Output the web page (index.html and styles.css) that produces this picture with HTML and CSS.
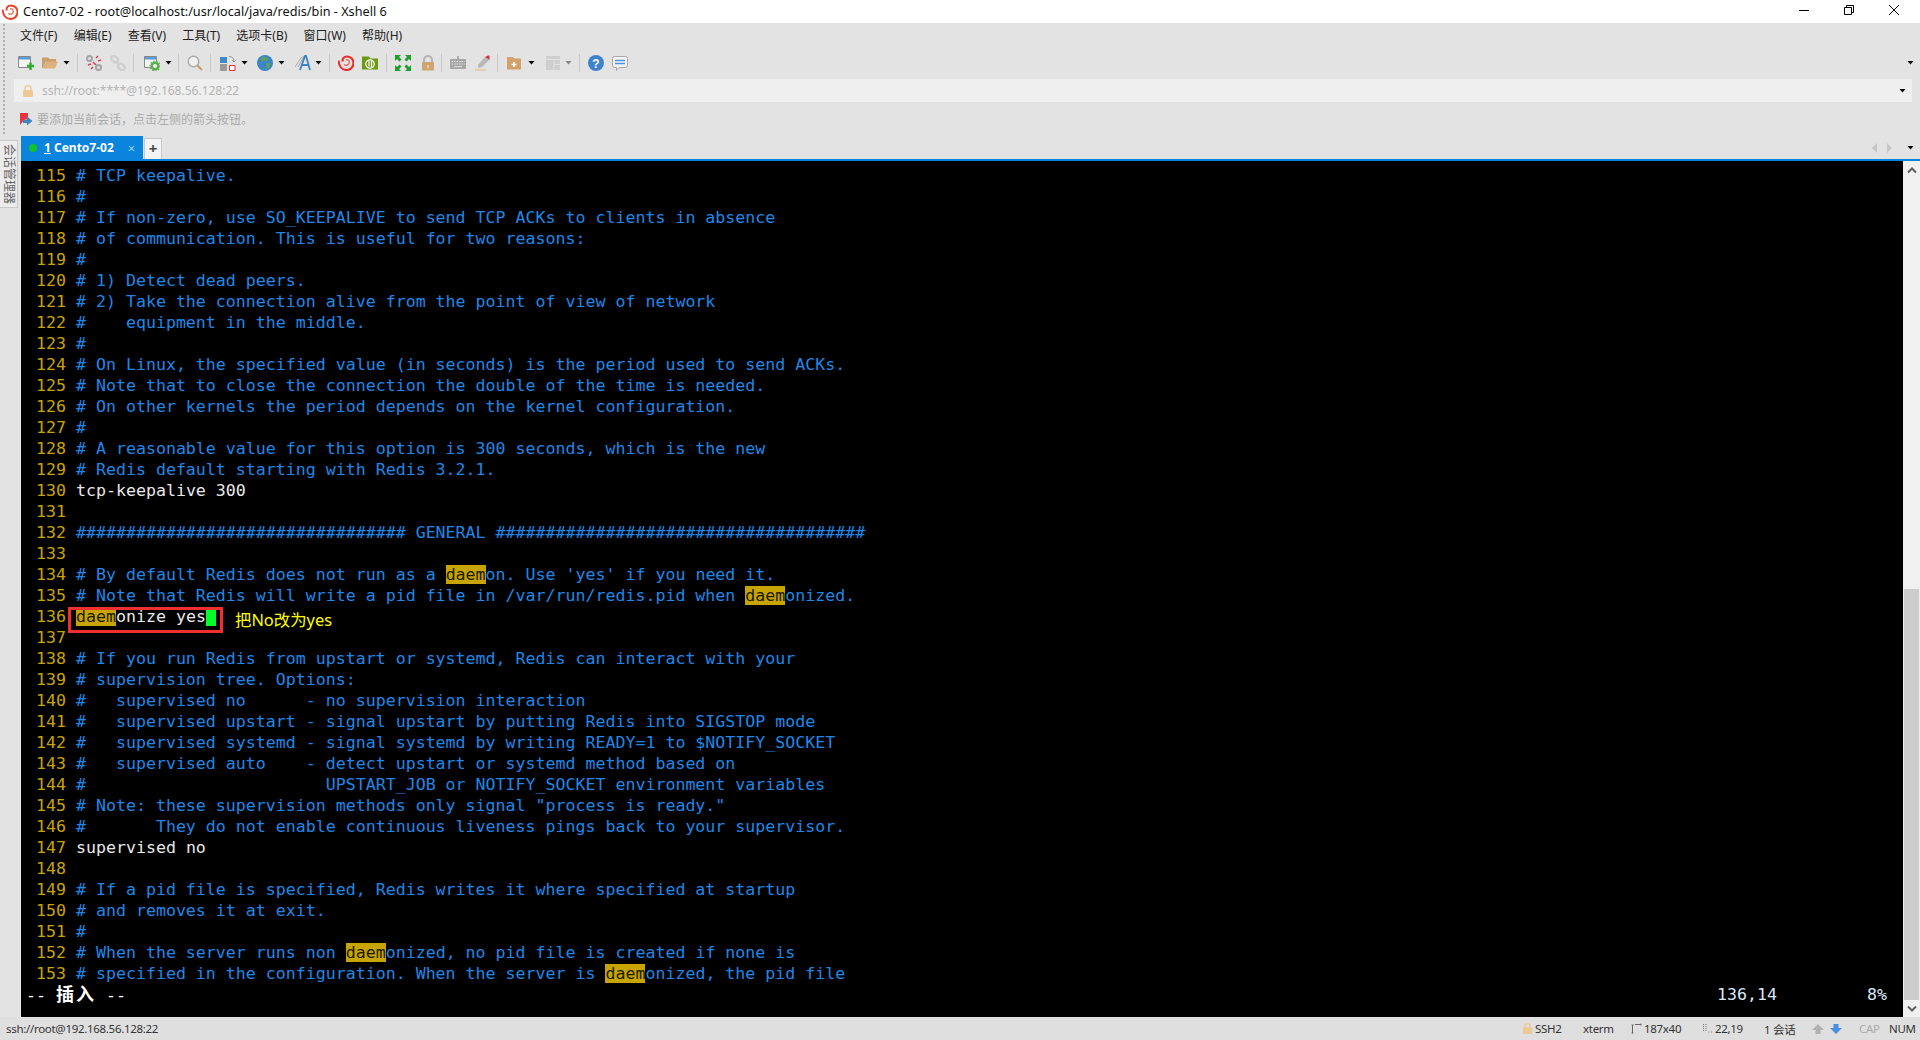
FILE: index.html
```html
<!DOCTYPE html>
<html lang="zh">
<head>
<meta charset="utf-8">
<title>Cento7-02 - Xshell 6</title>
<link rel="stylesheet" href="styles.css">
</head>
<body>
<div class="app">
  <header class="titlebar">
    <svg class="app-logo" viewBox="0 0 16 16"><path d="M.5 5.500C1 11 4 15 8.500 15c4 0 7-3 7-7 0-3.800-3-6.500-6.500-6.500-3 0-5 2.200-4.300 5" fill="none" stroke="#e8432e" stroke-width="2"/><path d="M6 9.500c2 1.500 5 .5 5.300-2 .2-2-1.800-3.300-3.300-2.500" fill="none" stroke="#ee7a62" stroke-width="1.500"/></svg>
    <span class="title-text">Cento7-02 - root@localhost:/usr/local/java/redis/bin - Xshell 6</span>
    <div class="win-btns">
      <svg class="win-btn" viewBox="0 0 12 12"><path d="M1 6.500h10" stroke="#000" fill="none"/></svg>
      <svg class="win-btn" viewBox="0 0 12 12"><path d="M1.500 3.500h7v7h-7zM3.500 3.500v-2h7v7h-2" stroke="#000" fill="none"/></svg>
      <svg class="win-btn" viewBox="0 0 12 12"><path d="M1 1l10 10M11 1L1 11" stroke="#000" fill="none"/></svg>
    </div>
  </header>

  <div class="chrome">
    <div class="grip"></div>
    <div class="chrome-main">
      <nav class="menubar">
        <span>文件(F)</span><span>编辑(E)</span><span>查看(V)</span><span>工具(T)</span><span>选项卡(B)</span><span>窗口(W)</span><span>帮助(H)</span>
      </nav>
      <div class="toolbar">
        <svg class="ic" viewBox="0 0 16 16"><path d="M.5 1.500h12v11H.5z" fill="#f4f4f4" stroke="#888"/><path d="M1 2h11v2.500H1z" fill="#5a9bd8"/><path d="M9 11h7M12.500 7.500v7.500" stroke="#2eaa2e" stroke-width="2.400"/></svg>
        <svg class="ic m8" viewBox="0 0 16 16"><path d="M0 2.500h6l1.500 1.500H14v3H3.500L1 13H0z" fill="#c9a06a"/><path d="M3.500 6.500H16L13 13.500H.7z" fill="#dcb27e"/></svg>
        <i class="dd"></i><i class="sep"></i>
        <svg class="ic m8" viewBox="0 0 16 16"><g fill="none" stroke="#a5a5a5" stroke-width="2"><circle cx="3.500" cy="3.500" r="2.500"/><circle cx="12.500" cy="12.500" r="2.500"/></g><path d="M10 3l2-2M12 6l3-1M2 10l3-1M5 14l2-2M7 7l3 3" stroke="#e0434f" stroke-width="1.600"/></svg>
        <svg class="ic m8" viewBox="0 0 16 16"><g fill="none" stroke="#cfcfcf" stroke-width="2.400"><rect x="1" y="1.500" width="7" height="5" rx="2" transform="rotate(40 4.500 4)"/><rect x="8" y="9.500" width="7" height="5" rx="2" transform="rotate(40 11.500 12)"/><path d="M6 6l4 4"/></g></svg>
        <i class="sep"></i>
        <svg class="ic m10" viewBox="0 0 16 16"><path d="M.5 1.500h12v11H.5z" fill="#f4f4f4" stroke="#888"/><path d="M1 2h11v2.500H1z" fill="#5a9bd8"/><circle cx="11" cy="11" r="3.300" fill="#f4f4f4" stroke="#58b04a" stroke-width="2.400"/><circle cx="11" cy="11" r="5" fill="none" stroke="#58b04a" stroke-width="1.200" stroke-dasharray="1.500 1.500"/></svg>
        <i class="dd"></i><i class="sep sep-6"></i>
        <svg class="ic m8" viewBox="0 0 16 16"><circle cx="6.500" cy="6.500" r="5.300" fill="#f0f0f0" stroke="#aaa" stroke-width="1.400"/><path d="M10.500 10.500l4.500 4.500" stroke="#c9a06a" stroke-width="2.200"/></svg>
        <i class="sep"></i>
        <svg class="ic m9" viewBox="0 0 16 16"><path d="M0 2h7v6H0z" fill="#3d8ad0"/><path d="M0 9h7v7H0z" fill="#999"/><path d="M9.500 10.500h5.500v5h-5.500z" fill="#f8f8f8" stroke="#e0303a"/><path d="M9 1.500c3 0 5 1.500 5 5M14 7l-2-2M14 7l1.800-2" stroke="#999" fill="none"/></svg>
        <i class="dd"></i>
        <svg class="ic m9" viewBox="0 0 16 16"><circle cx="8" cy="8" r="8" fill="#3d85c6"/><path d="M5 1.500l5 1 1.500 2.500-2 1.500L8 5 5.500 6.500 3 5zM9 8l4.500.5L12 13l-2.500 1.500z" fill="#58a45a"/></svg>
        <i class="dd"></i>
        <svg class="ic m10" viewBox="0 0 16 16"><path d="M0 12L7 1.500M3 12L9 1" stroke="#aaa" fill="none"/><path d="M5 15L10 1h1l4 14M7 10h6" stroke="#3d85c6" stroke-width="1.800" fill="none"/></svg>
        <i class="dd dd-4"></i><i class="sep"></i>
        <svg class="ic m8" viewBox="0 0 16 16"><path d="M.5 5.500C1 11 4 15 8.500 15c4 0 7-3 7-7 0-3.800-3-6.500-6.500-6.500-3 0-5 2.200-4.300 5" fill="none" stroke="#e8302e" stroke-width="2.200"/><path d="M6 9.500c2 1.500 5 .5 5.300-2 .2-2-1.800-3.300-3.300-2.500" fill="none" stroke="#f06a60" stroke-width="1.500"/></svg>
        <svg class="ic m8" viewBox="0 0 16 16"><path d="M0 1.500h7l1.500 2H16v11H0z" fill="#6c9a10"/><circle cx="8" cy="9" r="4.200" fill="none" stroke="#fff" stroke-width="1.200"/><path d="M7 5.500v6M9.500 6v6" stroke="#fff" stroke-width="1.200"/></svg>
        <i class="sep sep-8"></i>
        <svg class="ic m8" viewBox="0 0 16 16"><g fill="#1f9e2c"><path d="M0 0h6L4 2l2.500 2.500L4.500 6.500 2 4 0 6zM16 0v6l-2-2-2.500 2.500-2-2L12 2 10 0zM0 16v-6l2 2 2.500-2.500 2 2L4 14l2 2zM16 16h-6l2-2-2.500-2.500 2-2L14 12l2-2z"/></g></svg>
        <svg class="ic m9" viewBox="0 0 16 16"><path d="M4 7V5a4 4 0 0 1 8 0v2" fill="none" stroke="#b3b3b3" stroke-width="2"/><rect x="2" y="7" width="12" height="8.500" rx="1" fill="#d0a470"/><path d="M8 10v3" stroke="#f3ddc0" stroke-width="1.500"/></svg>
        <i class="sep sep-5"></i>
        <svg class="ic m8" viewBox="0 0 16 16"><rect y="4" width="16" height="10" rx="1" fill="#a5a5a5"/><path d="M8 1v3" stroke="#777"/><path d="M1.500 6.500h13M1.500 9h13" stroke="#e4e4e4" stroke-dasharray="1.500 1"/><path d="M4 11.700h8" stroke="#e4e4e4"/></svg>
        <svg class="ic m8" viewBox="0 0 16 16"><path d="M4 10l7-8 4 3-7 7-4 1z" fill="#b8b8b8"/><path d="M11 2l3-1.500 1.500 0V5z" fill="#d8333f"/><path d="M1 15h11" stroke="#e8b77e"/></svg>
        <i class="sep"></i>
        <svg class="ic m9" viewBox="0 0 16 16"><path d="M0 2h6l1.500 1.500H14v11H0z" fill="#d3a26a"/><path d="M7 7v5M4.500 9.500h5" stroke="#fff" stroke-width="1.600"/></svg>
        <i class="dd"></i>
        <svg class="ic m10" viewBox="0 0 16 16"><path d="M1 1h14v14H1z" fill="#cfcfcf"/><path d="M1 4.500h14M9 4.500V15M9 9.500h6" stroke="#e2e2e2"/></svg>
        <i class="dd dd-4 dd-off"></i><i class="sep"></i>
        <svg class="ic m8" viewBox="0 0 16 16"><circle cx="8" cy="8" r="8" fill="#3f82cc"/><text x="8" y="12.500" class="help-q">?</text></svg>
        <svg class="ic m8" viewBox="0 0 16 16"><path d="M2.500 1.500h11a2 2 0 0 1 2 2v7a2 2 0 0 1-2 2H7l-2.500 3v-3h-2a2 2 0 0 1-2-2v-7a2 2 0 0 1 2-2z" fill="#f3f3f3" stroke="#a8a8a8"/><path d="M3 5.500h10M3 8.500h10" stroke="#4f94dc" stroke-width="1.600"/></svg>
        <i class="dd dd-end"></i>
      </div>
      <div class="addressbar">
        <svg class="lock" viewBox="0 0 12 12"><path d="M3 5V3.500a3 3 0 0 1 6 0V5" fill="none" stroke="#ecc995" stroke-width="1.500"/><rect x="1" y="5" width="10" height="7" rx="1.500" fill="#ecc995"/></svg>
        <span class="addr-text">ssh://root:****@192.168.56.128:22</span>
        <i class="dd dd-end"></i>
      </div>
      <div class="hintbar">
        <svg class="flag" viewBox="0 0 13 13"><path d="M0 0h8v6l-4 1-4 5z" fill="#e8353f"/><path d="M3 7h4V3.500L12.500 8 7 12.500V10H3z" fill="#3d85c6"/></svg>
        <span>要添加当前会话，点击左侧的箭头按钮。</span>
      </div>
    </div>
  </div>

  <div class="workspace">
    <aside class="side">
      <div class="side-tab">会话管理器</div>
    </aside>
    <section class="session">
      <div class="tabbar">
        <div class="tab">
          <i class="dot"></i>
          <span class="tab-label"><u>1</u> Cento7-02</span>
          <span class="tab-close">×</span>
        </div>
        <div class="tab-add">+</div>
        <div class="tab-nav">
          <i class="tri-l"></i><i class="tri-r"></i><i class="dd"></i>
        </div>
      </div>
      <div class="termwrap">
        <main class="term"><div class="ln"> <b>115</b> # TCP keepalive.</div><div class="ln"> <b>116</b> #</div><div class="ln"> <b>117</b> # If non-zero, use SO_KEEPALIVE to send TCP ACKs to clients in absence</div><div class="ln"> <b>118</b> # of communication. This is useful for two reasons:</div><div class="ln"> <b>119</b> #</div><div class="ln"> <b>120</b> # 1) Detect dead peers.</div><div class="ln"> <b>121</b> # 2) Take the connection alive from the point of view of network</div><div class="ln"> <b>122</b> #    equipment in the middle.</div><div class="ln"> <b>123</b> #</div><div class="ln"> <b>124</b> # On Linux, the specified value (in seconds) is the period used to send ACKs.</div><div class="ln"> <b>125</b> # Note that to close the connection the double of the time is needed.</div><div class="ln"> <b>126</b> # On other kernels the period depends on the kernel configuration.</div><div class="ln"> <b>127</b> #</div><div class="ln"> <b>128</b> # A reasonable value for this option is 300 seconds, which is the new</div><div class="ln"> <b>129</b> # Redis default starting with Redis 3.2.1.</div><div class="ln"> <b>130</b> <em>tcp-keepalive 300</em></div><div class="ln"> <b>131</b> </div><div class="ln"> <b>132</b> ################################# GENERAL #####################################</div><div class="ln"> <b>133</b> </div><div class="ln"> <b>134</b> # By default Redis does not run as a <mark>daem</mark>on. Use 'yes' if you need it.</div><div class="ln"> <b>135</b> # Note that Redis will write a pid file in /var/run/redis.pid when <mark>daem</mark>onized.</div><div class="ln"> <b>136</b> <em><mark>daem</mark>onize yes<s> </s></em></div><div class="ln"> <b>137</b> </div><div class="ln"> <b>138</b> # If you run Redis from upstart or systemd, Redis can interact with your</div><div class="ln"> <b>139</b> # supervision tree. Options:</div><div class="ln"> <b>140</b> #   supervised no      - no supervision interaction</div><div class="ln"> <b>141</b> #   supervised upstart - signal upstart by putting Redis into SIGSTOP mode</div><div class="ln"> <b>142</b> #   supervised systemd - signal systemd by writing READY=1 to $NOTIFY_SOCKET</div><div class="ln"> <b>143</b> #   supervised auto    - detect upstart or systemd method based on</div><div class="ln"> <b>144</b> #                        UPSTART_JOB or NOTIFY_SOCKET environment variables</div><div class="ln"> <b>145</b> # Note: these supervision methods only signal "process is ready."</div><div class="ln"> <b>146</b> #       They do not enable continuous liveness pings back to your supervisor.</div><div class="ln"> <b>147</b> <em>supervised no</em></div><div class="ln"> <b>148</b> </div><div class="ln"> <b>149</b> # If a pid file is specified, Redis writes it where specified at startup</div><div class="ln"> <b>150</b> # and removes it at exit.</div><div class="ln"> <b>151</b> #</div><div class="ln"> <b>152</b> # When the server runs non <mark>daem</mark>onized, no pid file is created if none is</div><div class="ln"> <b>153</b> # specified in the configuration. When the server is <mark>daem</mark>onized, the pid file</div><div class="ln statusln"><em>-- <span class="cjk">插入</span> --</em><span class="pos">136,14</span><span class="pct">8%</span></div>
          <div class="redbox"></div>
          <div class="note">把No改为yes</div>
        </main>
        <div class="scrollbar">
          <div class="sb-arrow"><svg viewBox="0 0 12 8"><path d="M2 6.500l4-4 4 4" fill="none" stroke="#606060" stroke-width="2"/></svg></div>
          <div class="sb-track"><div class="sb-thumb"></div></div>
          <div class="sb-arrow"><svg viewBox="0 0 12 8"><path d="M2 1.500l4 4 4-4" fill="none" stroke="#606060" stroke-width="2"/></svg></div>
        </div>
      </div>
    </section>
  </div>

  <footer class="statusbar">
    <span class="conn">ssh://root@192.168.56.128:22</span>
    <div class="st-right">
      <svg class="st-lock" viewBox="0 0 12 12"><path d="M3 5V3.500a3 3 0 0 1 6 0V5" fill="none" stroke="#ecc995" stroke-width="1.500"/><rect x="1" y="4.500" width="10" height="7.500" rx="1.500" fill="#ecc995"/></svg>
      <span class="st-t st-ssh">SSH2</span>
      <span class="st-t st-xterm">xterm</span>
      <svg class="st-ic st-size" viewBox="0 0 11 11"><path d="M1.500 2v8M.5 2h2M.5 10h2M4 1.500h6M10 .5v2" stroke="#666" fill="none"/></svg>
      <span class="st-t st-dim">187x40</span>
      <svg class="st-ic st-pos" viewBox="0 0 11 11"><path d="M1.500 1v8M4 1v8M6.500 9h1M9 9h1" stroke="#777" stroke-dasharray="1 1" fill="none"/></svg>
      <span class="st-t st-cur">22,19</span>
      <span class="st-t st-sess">1 会话</span>
      <svg class="st-up" viewBox="0 0 12 10"><path d="M6 0l6 6H8.500v4h-5V6H0z" fill="#b0b0b0"/></svg>
      <svg class="st-down" viewBox="0 0 12 10"><path d="M6 10l6-6H8.500V0h-5v4H0z" fill="#4a90e2"/></svg>
      <span class="st-t st-cap">CAP</span>
      <span class="st-t st-num">NUM</span>
    </div>
  </footer>
</div>
</body>
</html>
```
FILE: styles.css
```css
* { box-sizing: border-box; }
html, body { margin: 0; padding: 0; height: 100%; overflow: hidden; }
body { font-family: "Noto Sans", "Noto Sans CJK SC", sans-serif; font-size: 12px; color: #333; background: #e3e3e3; }
.app { width: 1920px; height: 1040px; display: flex; flex-direction: column; overflow: hidden; }

.titlebar { height: 23px; background: #fff; display: flex; align-items: center; padding-left: 2px; flex: none; }
.app-logo { width: 16px; height: 16px; }
.title-text { margin-left: 5px; font-size: 12.7px; color: #111; line-height: 23px; }
.win-btns { margin-left: auto; display: flex; margin-right: 20px; margin-bottom: 3px; gap: 33px; }
.win-btn { width: 12px; height: 12px; }

.chrome { display: flex; flex: none; height: 113px; }
.grip { width: 14px; background-image: radial-gradient(circle, #b0b0b0 1px, transparent 1.200px); background-size: 4px 4px; background-repeat: no-repeat repeat; background-position: 2px 0; }
.chrome-main { flex: 1; min-width: 0; display: flex; flex-direction: column; }

.menubar { height: 23px; display: flex; align-items: center; gap: 16.2px; padding-left: 6px; color: #222; font-size: 12px; }
.toolbar { height: 33px; display: flex; align-items: center; padding-left: 4px; }
.ic { width: 16px; height: 16px; flex: none; }
.m8 { margin-left: 8px; }
.m9 { margin-left: 9px; }
.m10 { margin-left: 10px; }
.dd { flex: none; width: 7px; height: 4px; margin-left: 5px; background: #000; clip-path: polygon(0 0, 100% 0, 50% 100%); display: block; }
.dd-4 { margin-left: 4px; }
.dd-off { background: #888; }
.dd-end { margin-left: auto; margin-right: 6px; }
.sep { flex: none; width: 1px; height: 18px; margin-left: 7px; background: #c8c8c8; display: block; }
.sep-6 { margin-left: 6px; }
.sep-8 { margin-left: 8px; }
.sep-5 { margin-left: 5px; }
.help-q { font: bold 12px "Liberation Sans", sans-serif; fill: #fff; text-anchor: middle; }

.addressbar { height: 23px; background: #efefef; display: flex; align-items: center; margin-right: 8px; padding-left: 8px; }
.addressbar .dd-end { margin-right: 6px; }
.lock { width: 12px; height: 12px; flex: none; }
.addr-text { margin-left: 8px; color: #b4b4b4; font-size: 12px; }

.hintbar { flex: 1; display: flex; align-items: center; padding-left: 6px; color: #aaa; font-size: 12px; }
.flag { width: 13px; height: 13px; margin-right: 4px; }

.workspace { flex: 1; min-height: 0; display: flex; }
.side { width: 21px; flex: none; padding-top: 4px; }
.side-tab { width: 18px; height: 68px; background: #ececec; border: 1px solid #c8c8c8; border-left: 0; writing-mode: vertical-rl; text-orientation: sideways; font-size: 12px; color: #666; display: flex; align-items: center; justify-content: center; line-height: 16px; }

.session { flex: 1; min-width: 0; display: flex; flex-direction: column; }
.tabbar { height: 25px; flex: none; display: flex; align-items: stretch; border-bottom: 2px solid #0a84dc; }
.tab { width: 122px; background: #0a84dc; color: #fff; display: flex; align-items: center; padding-left: 8px; }
.dot { width: 8px; height: 8px; border-radius: 50%; background: #10c22c; flex: none; }
.tab-label { margin-left: 7px; font-weight: 700; font-size: 12px; }
.tab-close { margin-left: 14px; font-size: 13px; font-weight: 300; color: #d5ebfa; }
.tab-add { width: 18px; margin: 2px 0 0 1px; background: #f4f4f4; border: 1px solid #c8c8c8; border-bottom: 0; font-weight: 700; font-size: 15px; line-height: 18px; text-align: center; color: #444; }
.tab-nav { margin-left: auto; display: flex; align-items: center; padding-right: 6px; }
.tri-l { width: 0; height: 0; border: 5px solid transparent; border-left: 0; border-right: 5px solid #c6c6c6; display: block; }
.tri-r { width: 0; height: 0; border: 5px solid transparent; border-right: 0; border-left: 5px solid #c6c6c6; margin-left: 10px; display: block; }
.tab-nav .dd { margin-left: 15px; }

.termwrap { flex: 1; min-height: 0; display: flex; }
.term { position: relative; flex: 1; min-width: 0; background: #000; padding: 4px 0 0 5px; font-family: "DejaVu Sans Mono", monospace; font-size: 16.6px; color: #1e88e8; overflow: hidden; }
.ln { height: 21px; line-height: 21px; white-space: pre; position: relative; }
.ln b { font-weight: 400; color: #c8a400; }
.ln em { font-style: normal; color: #e8e8e8; }
mark { background: #c8a400; color: #1a1a00; }
.ln s { text-decoration: none; background: #00ff2a; }
.statusln em { color: #fff; }
.cjk { font-family: "Noto Sans CJK SC", sans-serif; font-size: 18px; letter-spacing: 2px; font-weight: 700; line-height: 1; }
.statusln { display: flex; }
.pos { margin-left: auto; color: #d8e8f8; }
.pct { margin-left: 90px; margin-right: 16px; color: #d8e8f8; }
.redbox { position: absolute; left: 47px; top: 446px; width: 155px; height: 26px; border: 3px solid #f03030; }
.note { position: absolute; left: 214px; top: 448px; color: #ffff00; font-family: "Noto Sans", "Noto Sans CJK SC", sans-serif; font-size: 16.4px; line-height: 22px; }

.scrollbar { width: 17px; flex: none; background: #f0f0f0; display: flex; flex-direction: column; }
.sb-arrow { height: 17px; flex: none; display: flex; align-items: center; justify-content: center; }
.sb-arrow svg { width: 12px; height: 8px; }
.sb-track { flex: 1; display: flex; flex-direction: column; justify-content: flex-end; padding: 0 1px; }
.sb-thumb { height: 411px; background: #cdcdcd; }

.statusbar { height: 23px; flex: none; background: #dfdfdf; display: flex; align-items: center; padding-left: 6px; color: #333; font-size: 11.5px; letter-spacing: -.3px; }
.st-right { margin-left: auto; display: flex; align-items: center; padding-right: 4px; }
.st-t { white-space: nowrap; }
.st-lock { width: 11px; height: 11px; flex: none; }
.st-ssh { margin-left: 2px; width: 27px; }
.st-xterm { margin-left: 21px; width: 30px; }
.st-ic { width: 11px; height: 11px; flex: none; }
.st-size { margin-left: 18px; }
.st-dim { margin-left: 2px; width: 36px; }
.st-pos { margin-left: 22px; }
.st-cur { margin-left: 2px; width: 27px; }
.st-sess { margin-left: 22px; width: 31px; }
.st-up { width: 12px; height: 10px; margin-left: 17px; }
.st-down { width: 12px; height: 10px; margin-left: 6px; }
.st-cap { margin-left: 17px; width: 22px; color: #aaa; }
.st-num { margin-left: 8px; width: 27px; }
```
